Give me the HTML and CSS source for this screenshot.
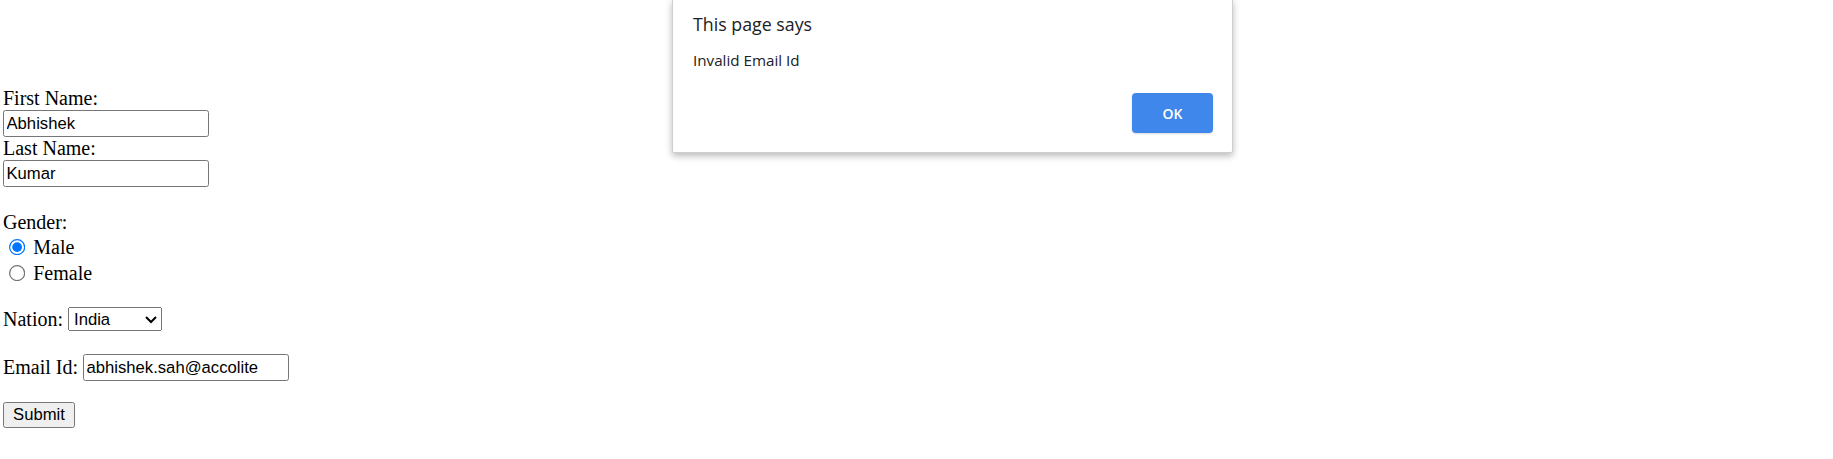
FILE: index.html
```html
<!DOCTYPE html>
<html lang="en">
<head>
<meta charset="utf-8">
<title>Registration</title>
<link rel="stylesheet" href="styles.css">
</head>
<body>
<form class="form">
  <label class="line">First Name:</label>
  <input class="text-input" type="text" value="Abhishek">
  <label class="line">Last Name:</label>
  <input class="text-input" type="text" value="Kumar">
  <div class="line line--gap">Gender:</div>
  <label class="radio-row"><input class="radio" type="radio" name="gender" checked><span class="radio-text">Male</span></label>
  <label class="radio-row"><input class="radio" type="radio" name="gender"><span class="radio-text">Female</span></label>
  <div class="field-row field-row--nation">
    <span>Nation:</span>
    <select class="select"><option>India</option><option>USA</option><option>UK</option></select>
  </div>
  <div class="field-row field-row--email">
    <span>Email Id:</span>
    <input class="text-input" type="text" value="abhishek.sah@accolite">
  </div>
  <button class="submit" type="button">Submit</button>
</form>

<div class="alert" role="alertdialog">
  <div class="alert__title">This page says</div>
  <div class="alert__message">Invalid Email Id</div>
  <div class="alert__actions"><button class="alert__ok" type="button">OK</button></div>
</div>
</body>
</html>
```

FILE: styles.css
```css
html, body {
  margin: 0;
  background: #fff;
}

body {
  font-family: "Liberation Serif", "Times New Roman", serif;
  font-size: 20px;
  line-height: 23px;
  color: #000;
}

.form {
  display: flex;
  flex-direction: column;
  align-items: flex-start;
  padding: 87px 0 0 3px;
  margin: 0;
}

.line {
  height: 23px;
  line-height: 23px;
}

.line--gap {
  margin-top: 24px;
}

.text-input {
  zoom: 1.25;
  box-sizing: border-box;
  width: 164.8px;
  height: 21.6px;
  margin: 0;
  padding: 1px 2px;
  border: 1px solid #767676;
  border-radius: 2px;
  font-family: "Liberation Sans", Arial, sans-serif;
  font-size: 13.333px;
  color: #000;
  background: #fff;
}

.radio-row {
  display: flex;
  align-items: center;
  height: 25px;
  margin-top: 1px;
}

.radio {
  zoom: 1.25;
  margin: 0 3px 0 5px;
}

.radio-text {
  margin-left: 4px;
}

.field-row {
  display: flex;
  align-items: center;
  gap: 5px;
}

.field-row--nation {
  margin-top: 21px;
  height: 24px;
}

.field-row--email {
  margin-top: 23px;
  height: 27px;
}

.select {
  zoom: 1.25;
  box-sizing: border-box;
  width: 75.2px;
  height: 19.2px;
  margin: 0;
  font-family: "Liberation Sans", Arial, sans-serif;
  font-size: 13.333px;
  color: #000;
}

.submit {
  zoom: 1.25;
  box-sizing: border-box;
  width: 57.6px;
  height: 20.8px;
  margin: 16.8px 0 0 0;
  padding: 1px 6px;
  border: 1px solid #767676;
  border-radius: 2px;
  background: #efefef;
  font-family: "Liberation Sans", Arial, sans-serif;
  font-size: 13.333px;
  color: #000;
}

.alert {
  position: absolute;
  top: -1px;
  left: 672px;
  width: 561px;
  height: 154px;
  box-sizing: border-box;
  display: flex;
  flex-direction: column;
  padding: 12px 19px 19px 20px;
  background: #fff;
  border: 1px solid #cfcfcf;
  border-radius: 0 0 2px 2px;
  box-shadow: 0 3px 7px rgba(0, 0, 0, 0.28);
  font-family: "Open Sans", "Noto Sans", sans-serif;
  color: #202124;
}

.alert__title {
  font-size: 17.8px;
  line-height: 24px;
}

.alert__message {
  margin-top: 14px;
  font-size: 15.2px;
  line-height: 20px;
}

.alert__actions {
  margin-top: auto;
  display: flex;
  justify-content: flex-end;
}

.alert__ok {
  width: 81px;
  height: 40px;
  border: none;
  border-radius: 4px;
  background: #3f87eb;
  color: #fff;
  font-family: "Open Sans", "Noto Sans", sans-serif;
  font-size: 14px;
  font-weight: 600;
  box-shadow: 0 1px 2px rgba(0, 0, 0, 0.15);
}
```
